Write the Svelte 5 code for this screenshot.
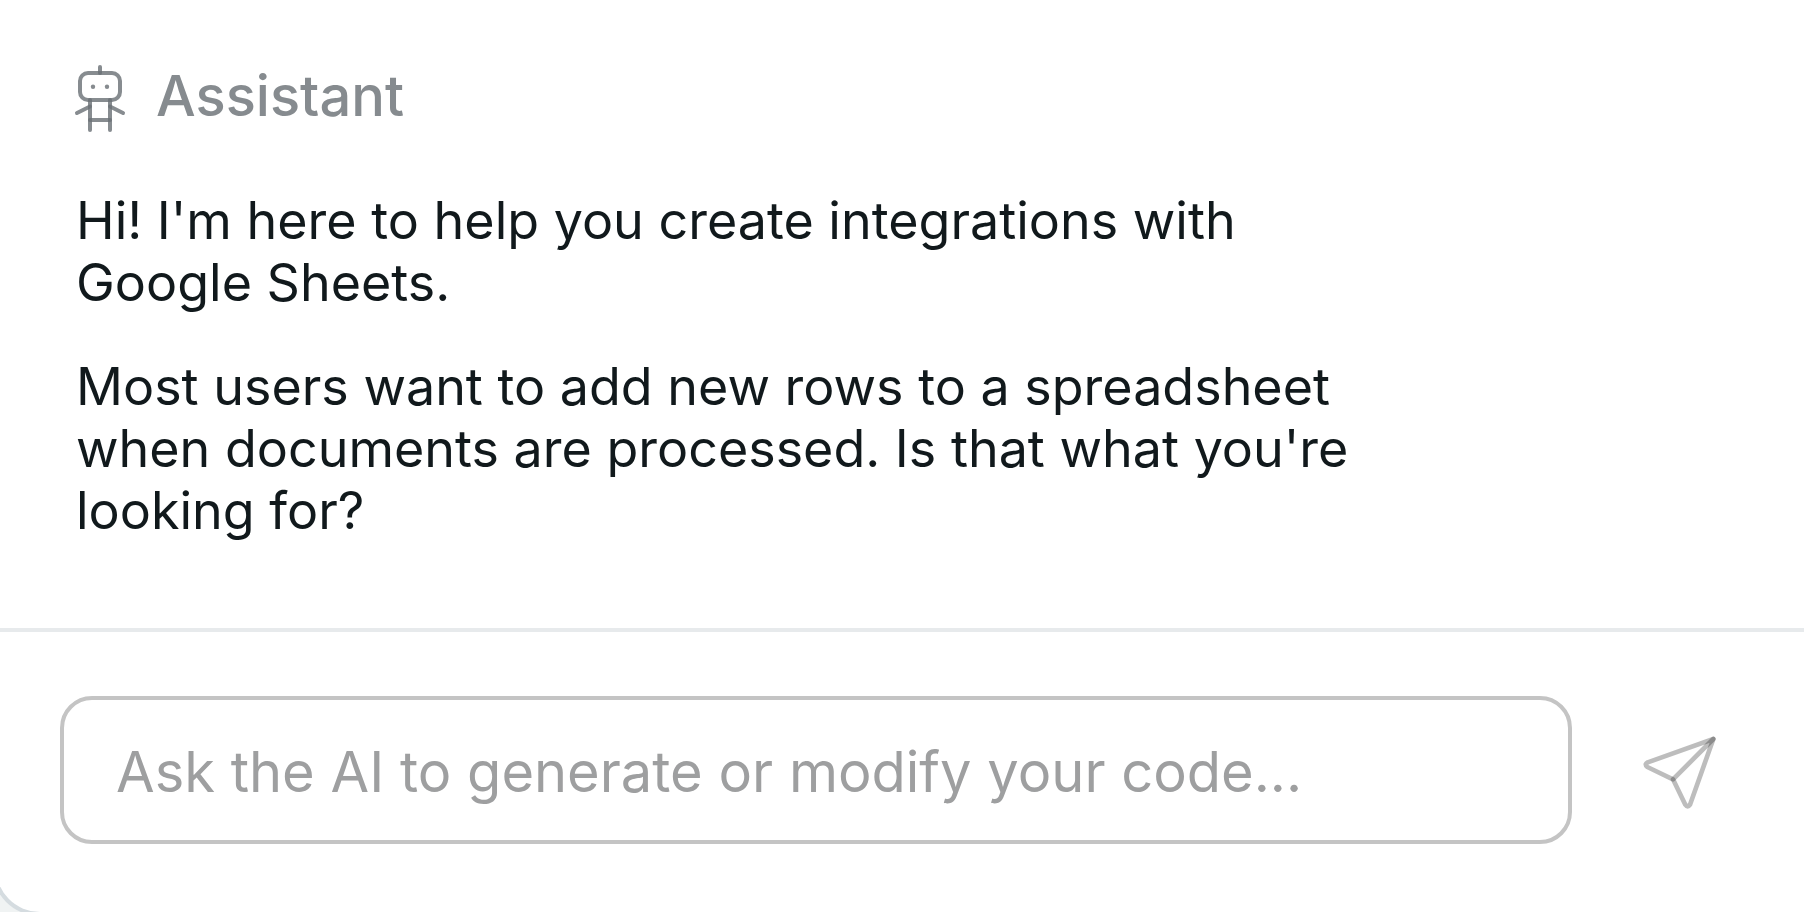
<script>
  let prompt = $state('');

  const paragraphs = [
    "Hi! I'm here to help you create integrations with Google Sheets.",
    "Most users want to add new rows to a spreadsheet when documents are processed. Is that what you're looking for?"
  ];
</script>

<div class="page">
  <main class="panel">
    <section class="message">
      <header>
        <svg class="robot" viewBox="0 0 56 72" aria-hidden="true">
          <path d="M28 7v6" />
          <rect x="8" y="13" width="40" height="27" rx="8" />
          <path d="M18 40v30" />
          <path d="M38 40v30" />
          <path d="M18 60h20" />
          <path d="M18 46.500L5 53" />
          <path d="M38 46.500L51 53" />
          <circle cx="21" cy="26.700" r="2.200" />
          <circle cx="35" cy="26.700" r="2.200" />
        </svg>
        <h1>Assistant</h1>
      </header>
      <div class="text">
        {#each paragraphs as paragraph}
          <p>{paragraph}</p>
        {/each}
      </div>
    </section>

    <form class="composer" onsubmit={(event) => event.preventDefault()}>
      <input
        type="text"
        aria-label="Message"
        placeholder="Ask the AI to generate or modify your code..."
        bind:value={prompt}
      />
      <button type="submit" aria-label="Send">
        <svg viewBox="36 36 288 288" aria-hidden="true">
          <path d="M159 208L82 171Q72 163 83 157L280 87L210 284Q203 294 196 284Z" />
          <path d="M159 208L280 87" />
        </svg>
      </button>
    </form>
  </main>
</div>

<style>
  :global(body) {
    margin: 0;
    background: #f0f3f3;
  }

  .page {
    display: flex;
    min-height: 100vh;
    overflow: hidden;
    font-family: Inter, sans-serif;
    font-optical-sizing: none;
  }

  .panel {
    flex: 1;
    display: flex;
    flex-direction: column;
    margin: 0 -8px -4px;
    border: 4px solid #d5dce0;
    border-top: 0;
    border-radius: 0 0 0 48px;
    background: #fff;
  }

  .message {
    flex: 1;
    padding: 60px 76px 80px;
  }

  header {
    display: flex;
    align-items: center;
    gap: 28px;
    color: #868b8f;
  }

  .robot {
    width: 56px;
    height: 72px;
    fill: none;
    stroke: rgba(107, 113, 118, 0.81);
    stroke-width: 4;
    stroke-linecap: round;
  }

  .robot circle {
    fill: #868b8f;
    stroke: none;
  }

  h1 {
    margin: 0;
    font-size: 56px;
    font-weight: 500;
    line-height: 72px;
  }

  .text {
    max-width: 1312px;
    margin-top: 58px;
    padding-left: 4px;
    color: #11191c;
    font-size: 52px;
    line-height: 62px;
  }

  p {
    margin: 0 0 42px;
  }

  p:last-child {
    margin-bottom: 0;
  }

  .composer {
    display: flex;
    align-items: center;
    gap: 60px;
    padding: 64px 80px 68px 64px;
    border-top: 4px solid #e7eaec;
  }

  input {
    flex: 1;
    min-width: 0;
    box-sizing: border-box;
    height: 148px;
    padding: 4px 52px 0;
    border: 4px solid #c4c4c4;
    border-radius: 32px;
    outline: 0;
    background: transparent;
    color: #11191c;
    font: inherit;
    font-size: 56px;
  }

  input::placeholder {
    color: #9e9fa0;
    opacity: 1;
  }

  button {
    display: flex;
    padding: 0;
    border: 0;
    background: none;
    cursor: pointer;
  }

  button svg {
    width: 96px;
    height: 96px;
    fill: none;
    stroke: rgba(0, 0, 0, 0.26);
    stroke-width: 14;
    stroke-linecap: round;
    stroke-linejoin: round;
  }
</style>
